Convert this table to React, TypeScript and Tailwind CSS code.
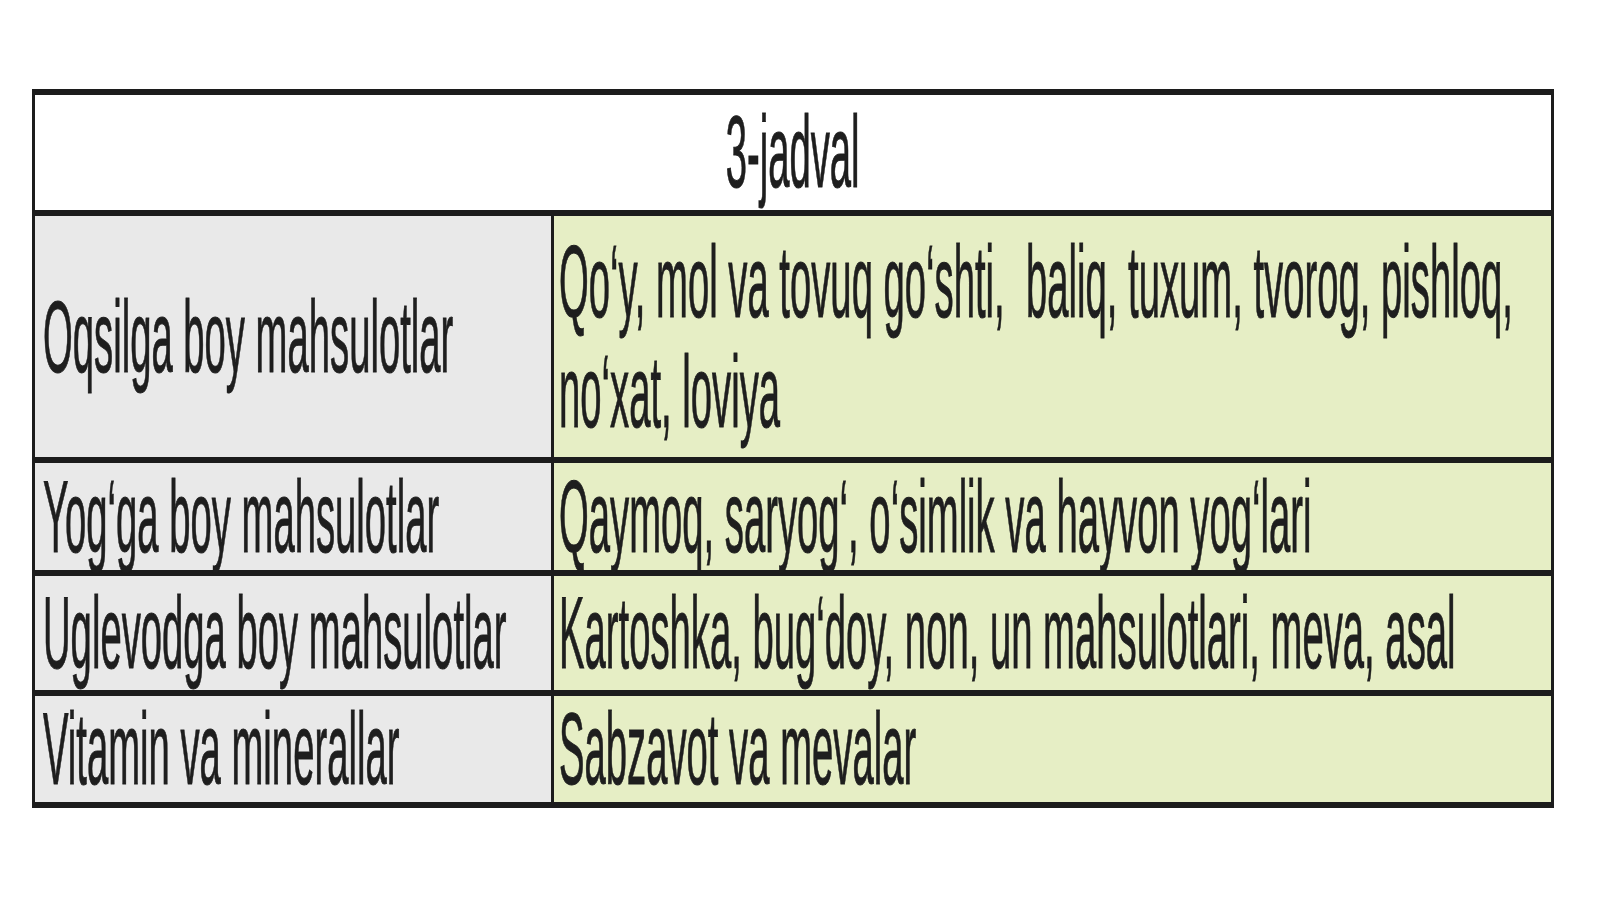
import React from 'react'

// 3-jadval: food groups table, rendered as an image-like slide
const FONT = { fontFamily: '"Liberation Sans", Arial, sans-serif' }

interface Row {
  label: string
  value: React.ReactNode
  height: string
}

// heights include the 6px top border (border-box)
const ROWS: Row[] = [
  {
    label: 'Oqsilga boy mahsulotlar',
    value: (
      <>
        Qo‘y, mol va tovuq go‘shti,&nbsp; baliq, tuxum, tvorog, pishloq,
        <br />
        no‘xat, loviya
      </>
    ),
    height: 'h-[247px]',
  },
  { label: 'Yog‘ga boy mahsulotlar', value: 'Qaymoq, saryog‘, o‘simlik va hayvon yog‘lari', height: 'h-[113px]' },
  { label: 'Uglevodga boy mahsulotlar', value: 'Kartoshka, bug‘doy, non, un mahsulotlari, meva, asal', height: 'h-[120px]' },
  { label: 'Vitamin va minerallar', value: 'Sabzavot va mevalar', height: 'h-[112px]' },
]

const TEXT = 'inline-block whitespace-nowrap text-[102px] scale-x-[0.375] [-webkit-text-stroke:1px_#1e1e1e]'

export default function App() {
  return (
    <div className="w-full h-[899px] bg-white overflow-hidden pt-[89px] pl-[32px] text-[#1e1e1e]" style={FONT}>
      <div className="w-[1522px] flex flex-col border-x-[3px] border-y-[6px] border-[#1c1c1c]">
        {/* Header */}
        <div className="h-[115px] flex items-center justify-center bg-white">
          <span className={`${TEXT} leading-[115px] origin-center`}>3-jadval</span>
        </div>

        {ROWS.map(row => (
          <div key={row.label} className={`flex border-t-[6px] border-[#1c1c1c] ${row.height}`}>
            <div className="w-[519px] shrink-0 min-w-0 flex items-center pl-[8px] bg-[#e9e9e9] border-r-[3px] border-[#1c1c1c]">
              <span className={`${TEXT} leading-[110px] origin-left`}>{row.label}</span>
            </div>
            <div className="flex-1 min-w-0 flex items-center pl-[5px] bg-[#e6eec5]">
              <span className={`${TEXT} leading-[110px] origin-left`}>{row.value}</span>
            </div>
          </div>
        ))}
      </div>
    </div>
  )
}
